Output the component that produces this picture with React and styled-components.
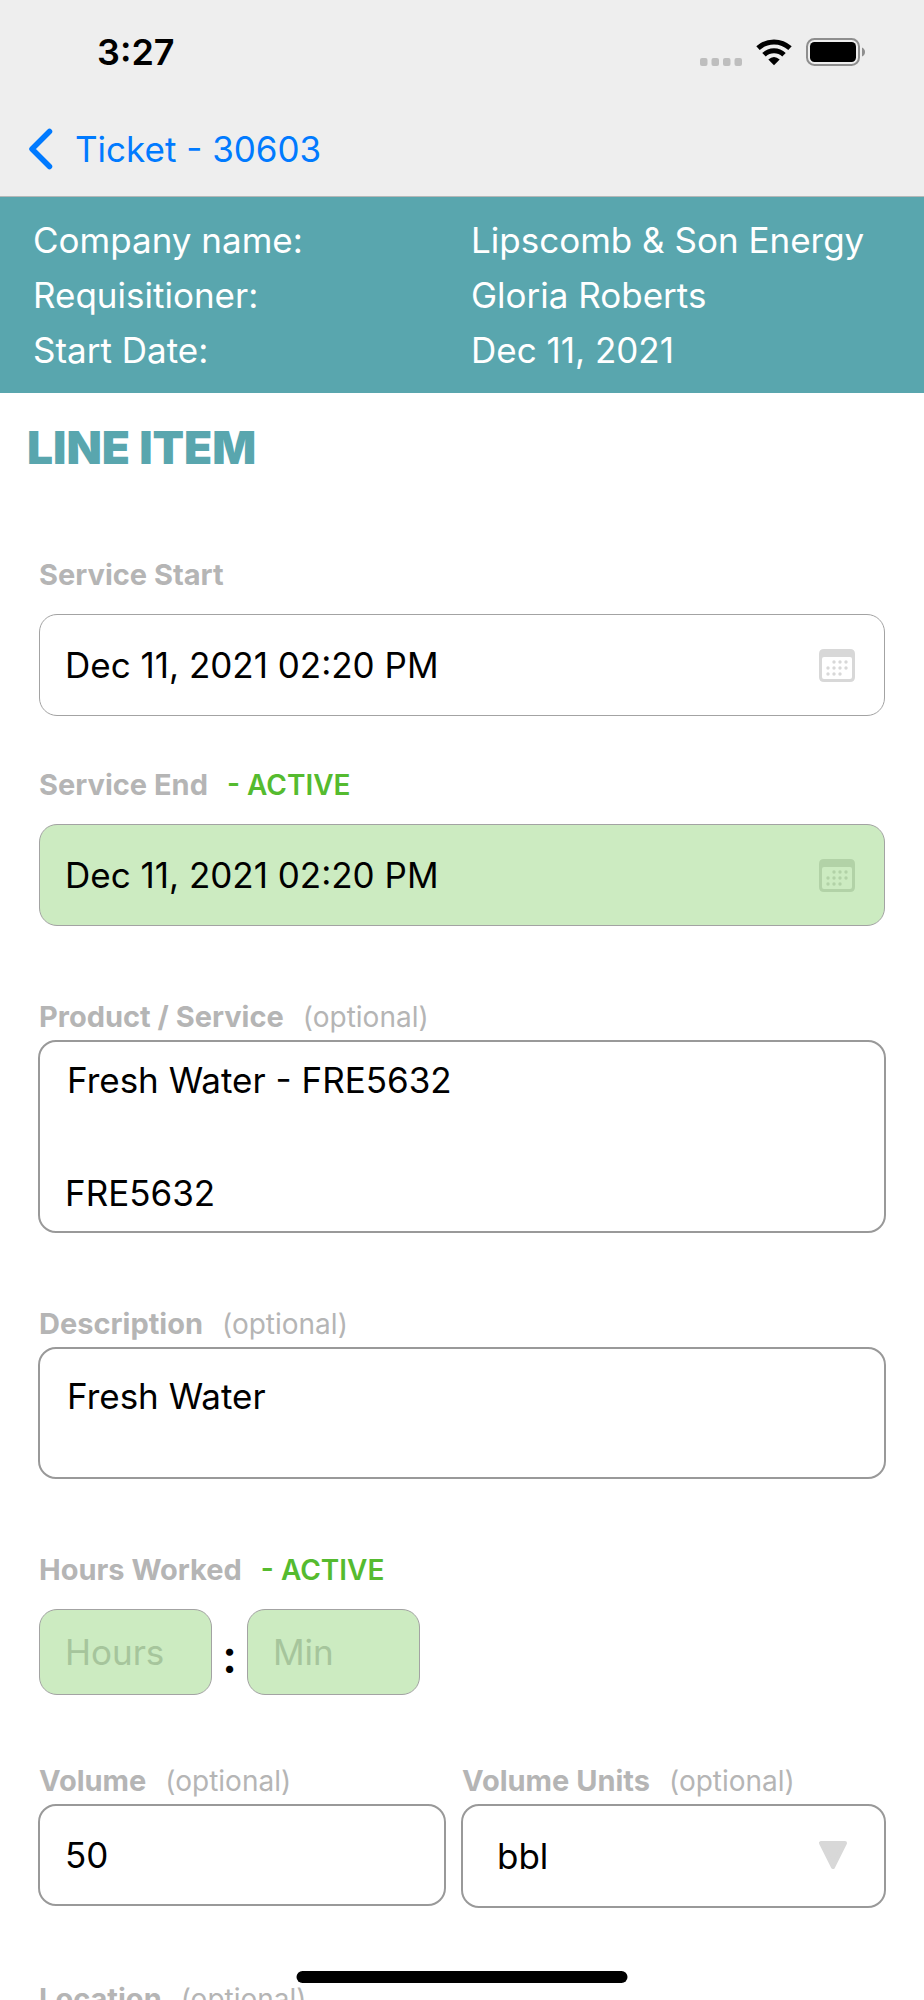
import React from 'react';
import styled, {createGlobalStyle} from "styled-components";

const App = () => {
    return (
        <Screen>
            <GlobalStyle />
            <Header>
                <StatusBar>
                    <Time>3:27</Time>
                    <StatusIcons>
                        <SignalIcon />
                        <WifiIcon />
                        <BatteryIcon />
                    </StatusIcons>
                </StatusBar>
                <NavBar>
                    <BackLink href="#ticket">
                        <svg width="26" height="42" viewBox="0 0 26 42" fill="none" stroke="currentColor" strokeWidth="5.5" strokeLinecap="round" strokeLinejoin="round">
                            <path d="M22.500 3.500 5 21 22.500 38.500" />
                        </svg>
                        Ticket - 30603
                    </BackLink>
                </NavBar>
            </Header>
            <Summary>
                {summary.map(item => (
                    <React.Fragment key={item.name}>
                        <dt>{item.name}</dt>
                        <dd>{item.value}</dd>
                    </React.Fragment>
                ))}
            </Summary>
            <Content>
                <Title>LINE ITEM</Title>
                <Form>
                    <DateRows>
                        <DateField id="service-start" label="Service Start" />
                        <DateField id="service-end" label="Service End" active />
                    </DateRows>
                    <Field>
                        <FieldLabel id="product" text="Product / Service" optional />
                        <ProductBox>
                            <TextArea id="product" rows="1" defaultValue="Fresh Water - FRE5632" />
                            <ProductCode htmlFor="product">FRE5632</ProductCode>
                        </ProductBox>
                    </Field>
                    <Field>
                        <FieldLabel id="description" text="Description" optional />
                        <DescriptionBox>
                            <TextArea id="description" rows="1" defaultValue="Fresh Water" />
                        </DescriptionBox>
                    </Field>
                    <Field $loose>
                        <FieldLabel id="hours" text="Hours Worked" active />
                        <HoursRow>
                            <HoursInput id="hours" placeholder="Hours" />
                            <Colon>:</Colon>
                            <HoursInput aria-label="Minutes" placeholder="Min" />
                        </HoursRow>
                    </Field>
                    <VolumeRow>
                        <Field>
                            <FieldLabel id="volume" text="Volume" optional />
                            <VolumeInput id="volume" defaultValue="50" />
                        </Field>
                        <Field>
                            <FieldLabel id="units" text="Volume Units" optional />
                            <SelectWrap>
                                <UnitSelect id="units" defaultValue="bbl">
                                    <option value="bbl">bbl</option>
                                    <option value="gal">gal</option>
                                </UnitSelect>
                                <svg width="30" height="30" viewBox="0 0 30 30" fill="#d8d8d8" stroke="#d8d8d8" strokeWidth="4" strokeLinejoin="round">
                                    <path d="M3 3H27L15 27Z" />
                                </svg>
                            </SelectWrap>
                        </Field>
                    </VolumeRow>
                    <Field>
                        <FieldLabel id="location" text="Location" optional />
                        <VolumeInput id="location" />
                    </Field>
                </Form>
            </Content>
            <HomeIndicator />
        </Screen>
    );
};

const summary = [
    {name: "Company name:", value: "Lipscomb & Son Energy"},
    {name: "Requisitioner:", value: "Gloria Roberts"},
    {name: "Start Date:", value: "Dec 11, 2021"},
];

const FieldLabel = ({id, text, active, optional}) => (
    <Label htmlFor={id}>
        <b>{text}</b>
        {active && <Active>- ACTIVE</Active>}
        {optional && <Optional>(optional)</Optional>}
    </Label>
);

const DateField = ({id, label, active}) => (
    <Field $loose>
        <FieldLabel id={id} text={label} active={active} />
        <DateBox $active={active}>
            <input id={id} defaultValue="Dec 11, 2021 02:20 PM" />
            <button type="button" aria-label={`Pick ${label}`}>
                <CalendarIcon />
            </button>
        </DateBox>
    </Field>
);

const calendarDots = [[15, 13], [21, 13], [27, 13], [9, 19], [15, 19], [21, 19], [27, 19], [9, 25], [15, 25], [21, 25]];

const CalendarIcon = () => (
    <svg width="36" height="33" viewBox="0 0 36 33" fill="currentColor">
        <path fillRule="evenodd" d="M5 0H31Q36 0 36 5V28Q36 33 31 33H5Q0 33 0 28V5Q0 0 5 0ZM5 8Q3 8 3 10V28Q3 30 5 30H31Q33 30 33 28V10Q33 8 31 8Z" />
        {calendarDots.map(([x, y]) => <circle key={`${x}-${y}`} cx={x} cy={y} r="1.7" />)}
    </svg>
);

const SignalIcon = () => (
    <svg width="42" height="28" viewBox="0 0 42 28" fill="#bebebe">
        <rect x="0" y="20" width="7.500" height="8" rx="2" />
        <rect x="11.500" y="20" width="7.500" height="8" rx="2" />
        <rect x="23" y="20" width="7.500" height="8" rx="2" />
        <rect x="34.500" y="20" width="7.500" height="8" rx="2" />
    </svg>
);

const WifiIcon = () => (
    <svg width="36" height="28" viewBox="0 0 36 28">
        <path d="M2 10.200A23.500 23.500 0 0 1 34 10.200" fill="none" stroke="#000" strokeWidth="5" />
        <path d="M8 16.800A14.500 14.500 0 0 1 28 16.800" fill="none" stroke="#000" strokeWidth="5" />
        <path d="M12.300 21.500Q18 16.500 23.700 21.500L18 27.300Z" />
    </svg>
);

const BatteryIcon = () => (
    <svg width="60" height="28" viewBox="0 0 60 28">
        <rect x="1" y="1" width="52" height="26" rx="7.500" fill="none" stroke="#8e8e8e" strokeWidth="2" />
        <rect x="4" y="4" width="46" height="20" rx="4.500" />
        <path d="M56 9.500Q59 11 59 14T56 18.500Z" fill="#8e8e8e" />
    </svg>
);

const GlobalStyle = createGlobalStyle`
    *{
        box-sizing: border-box;
    }
    body{
        margin: 0;
        background: white;
    }
    body, input, textarea, select, button{
        font-family: Inter, "Liberation Sans", sans-serif;
        font-size: 35px;
        color: black;
    }
    svg{
        display: block;
    }
`

const Screen = styled.div`
    height: 100vh;
    display: flex;
    flex-direction: column;
    overflow: hidden;
`

const Header = styled.header`
    background: #eeeeee;
    border-bottom: 1px solid #b4b8b8;
`

const StatusBar = styled.div`
    height: 104px;
    padding: 0 58px 0 97px;
    display: flex;
    align-items: center;
    justify-content: space-between;
`

const Time = styled.span`
    font-size: 36px;
    font-weight: 600;
`

const StatusIcons = styled.div`
    display: flex;
    gap: 14px;
`

const NavBar = styled.nav`
    height: 92px;
    padding: 0 27px 2px;
    display: flex;
    align-items: center;
`

const BackLink = styled.a`
    display: flex;
    align-items: center;
    gap: 22px;
    color: #007aff;
    text-decoration: none;
`

const Summary = styled.dl`
    margin: 0;
    padding: 16px 33px 15px;
    display: grid;
    grid-template-columns: 1fr 1fr;
    column-gap: 18px;
    line-height: 55px;
    background: #59a6ae;
    color: white;
    dd{
        margin: 0;
    }
`

const Content = styled.main`
    flex: 1;
    min-height: 0;
    padding: 24px 38px;
    overflow-y: auto;
    scrollbar-width: none;
`

const Title = styled.h1`
    margin: 0 -11px 80px;
    font-size: 46px;
    line-height: 60px;
    font-weight: 900;
    color: #59a6ae;
`

const Form = styled.form`
    display: flex;
    flex-direction: column;
    gap: 73px;
`

const DateRows = styled.div`
    display: flex;
    flex-direction: column;
    gap: 51px;
`

const Field = styled.div`
    display: flex;
    flex-direction: column;
    gap: ${props => props.$loose ? "21px" : "5px"};
`

const Label = styled.label`
    padding-left: 1px;
    display: flex;
    gap: 19px;
    font-size: 29px;
    line-height: 36px;
    white-space: nowrap;
    color: #b5b5b5;
`

const Active = styled.span`
    font-size: 28px;
    font-weight: 600;
    color: #55bb2f;
`

const Optional = styled.span`
    font-size: 28px;
`

const Box = styled.div`
    border: 2px solid #999999;
    border-radius: 18px;
    background: white;
`

const DateBox = styled(Box)`
    height: 102px;
    margin: 0 1px;
    padding: 0 29px 0 25px;
    display: flex;
    align-items: center;
    border: 1px solid #a3a3a3;
    background: ${props => props.$active ? "#ccebc1" : "white"};
    input{
        flex: 1;
        min-width: 0;
        padding: 0;
        border: 0;
        background: none;
    }
    button{
        padding: 0;
        border: 0;
        background: none;
        color: ${props => props.$active ? "#b2d2a7" : "#d8d8d8"};
    }
`

const TextArea = styled.textarea`
    display: block;
    width: 100%;
    padding: 0 0 0 2px;
    border: 0;
    line-height: 42px;
    resize: none;
    overflow: hidden;
    background: none;
`

const ProductBox = styled(Box)`
    height: 193px;
    padding: 17px 25px;
    display: flex;
    flex-direction: column;
    justify-content: space-between;
`

const ProductCode = styled.output`
    line-height: 42px;
`

const DescriptionBox = styled(Box)`
    height: 132px;
    padding: 26px 25px;
`

const HoursRow = styled.div`
    padding: 0 1px;
    display: flex;
    align-items: center;
`

const HoursInput = styled.input`
    width: 173px;
    height: 86px;
    padding: 0 25px;
    border: 1px solid #a3a3a3;
    border-radius: 18px;
    background: #ccebc1;
    &::placeholder{
        color: #a6c59c;
        opacity: 1;
    }
`

const Colon = styled.span`
    width: 35px;
    padding-top: 8px;
    text-align: center;
    font-weight: 600;
    font-size: 46px;
    line-height: 46px;
`

const VolumeRow = styled.div`
    margin-top: -5px;
    display: grid;
    grid-template-columns: 408fr 425fr;
    column-gap: 15px;
`

const VolumeInput = styled.input`
    width: 100%;
    height: 102px;
    padding: 0 25px;
    border: 2px solid #999999;
    border-radius: 18px;
    background: white;
`

const SelectWrap = styled.div`
    position: relative;
    svg{
        position: absolute;
        right: 38px;
        top: 36px;
        pointer-events: none;
    }
`

const UnitSelect = styled.select`
    appearance: none;
    display: block;
    width: 100%;
    height: 104px;
    padding: 0 34px;
    border: 2px solid #999999;
    border-radius: 18px;
    background: white;
`

const HomeIndicator = styled.div`
    position: fixed;
    left: 50%;
    bottom: 17px;
    width: 331px;
    height: 12px;
    transform: translateX(-50%);
    border-radius: 6px;
    background: black;
`

export default App;
